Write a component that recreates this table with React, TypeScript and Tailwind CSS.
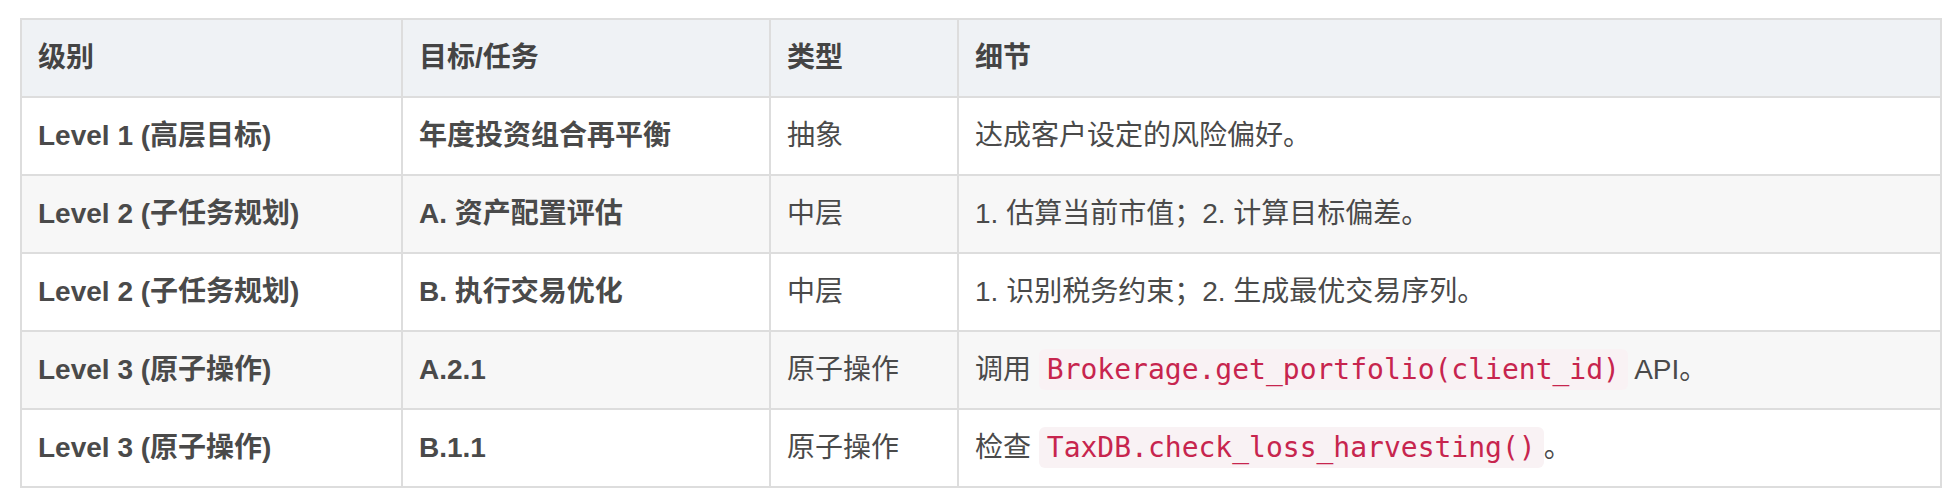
import React from "react";

const rows = [
  { level: "Level 1 (高层目标)", goal: "年度投资组合再平衡", type: "抽象", detail: <>达成客户设定的风险偏好。</> },
  { level: "Level 2 (子任务规划)", goal: "A. 资产配置评估", type: "中层", detail: <>1. 估算当前市值；2. 计算目标偏差。</> },
  { level: "Level 2 (子任务规划)", goal: "B. 执行交易优化", type: "中层", detail: <>1. 识别税务约束；2. 生成最优交易序列。</> },
  {
    level: "Level 3 (原子操作)",
    goal: "A.2.1",
    type: "原子操作",
    detail: (
      <>
        调用 <Code>Brokerage.get_portfolio(client_id)</Code> API。
      </>
    ),
  },
  {
    level: "Level 3 (原子操作)",
    goal: "B.1.1",
    type: "原子操作",
    detail: (
      <>
        检查 <Code>TaxDB.check_loss_harvesting()</Code>。
      </>
    ),
  },
];

function Code({ children }: { children: React.ReactNode }) {
  return (
    <code className="rounded-[6px] bg-[#f9f2f4] px-[8px] py-[4px] text-[28px] text-[#c7254e] [font-family:'DejaVu_Sans_Mono',monospace]">
      {children}
    </code>
  );
}

export default function App() {
  return (
    <div className="min-h-[504px] bg-white pl-[20px] pr-[18px] pt-[18px] [font-family:'Liberation_Sans','Noto_Sans_CJK_SC',sans-serif]">
      <table className="w-[1922px] table-fixed border-collapse text-[28px] leading-[44px] text-[#4a4a4a]">
        <colgroup>
          <col className="w-[381px]" />
          <col className="w-[368px]" />
          <col className="w-[188px]" />
          <col />
        </colgroup>
        <thead>
          <tr className="bg-[#eff2f5]">
            <th className="border-2 border-[#dddddd] px-[16px] py-[16px] text-left font-bold text-[#444]">级别</th>
            <th className="border-2 border-[#dddddd] px-[16px] py-[16px] text-left font-bold text-[#444]">目标/任务</th>
            <th className="border-2 border-[#dddddd] px-[16px] py-[16px] text-left font-bold text-[#444]">类型</th>
            <th className="border-2 border-[#dddddd] px-[16px] py-[16px] text-left font-bold text-[#444]">细节</th>
          </tr>
        </thead>
        <tbody>
          {rows.map((r, i) => (
            <tr key={i} className={i % 2 === 1 ? "bg-[#f7f7f7]" : "bg-white"}>
              <td className="border-2 border-[#dddddd] px-[16px] py-[16px] font-bold">{r.level}</td>
              <td className="border-2 border-[#dddddd] px-[16px] py-[16px] font-bold">{r.goal}</td>
              <td className="border-2 border-[#dddddd] px-[16px] py-[16px]">{r.type}</td>
              <td className="whitespace-nowrap border-2 border-[#dddddd] px-[16px] py-[16px]">{r.detail}</td>
            </tr>
          ))}
        </tbody>
      </table>
    </div>
  );
}
